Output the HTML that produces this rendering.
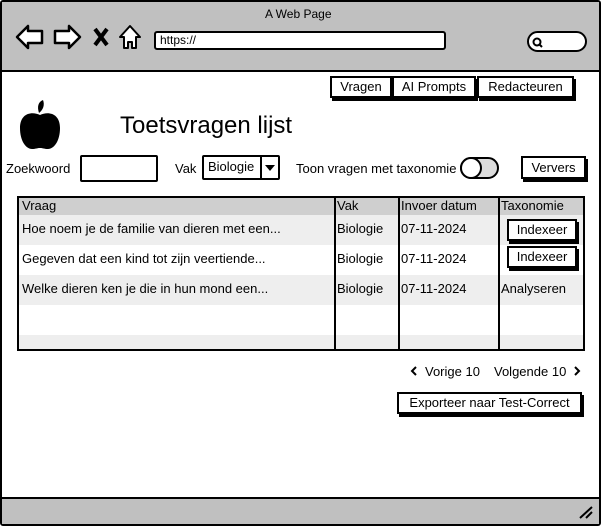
<!DOCTYPE html>
<html><head><style>
*{box-sizing:border-box;margin:0;padding:0}
body{width:601px;height:526px;background:#fff;font-family:"Liberation Sans",sans-serif;font-size:13px;color:#000;position:relative;overflow:hidden}
.a{position:absolute}
.btn{position:absolute;border:2px solid #000;background:#fff;box-shadow:2px 3px 0 #000;text-align:center;font-size:13px}
.t{position:absolute;white-space:nowrap}
</style></head><body>
<div class="a" style="left:0;top:0;width:601px;height:526px;border:2px solid #000;border-radius:3px"></div>
<div class="a" style="left:2px;top:2px;width:597px;height:70px;background:#c0c0c0;border-bottom:2px solid #000"></div>
<div class="t" style="left:265px;top:7px;font-size:12px">A Web Page</div>
<svg class="a" style="left:14px;top:22px" width="132" height="30" viewBox="0 0 132 30">
<path d="M3 15 L14 4 L14 9 L28 9 L28 21 L14 21 L14 26 Z" fill="#fff" stroke="#000" stroke-width="2.5" stroke-linejoin="round"/>
<path d="M66 15 L55 4 L55 9 L41 9 L41 21 L55 21 L55 26 Z" fill="#fff" stroke="#000" stroke-width="2.5" stroke-linejoin="round"/>
<path d="M81 7 L93 23 M93 7 L81 23" stroke="#000" stroke-width="4"/>
<path d="M106 15 L116 4 L126 15 L122 15 L122 26 L118 26 L118 20 L114 20 L114 26 L110 26 L110 15 Z" fill="#fff" stroke="#000" stroke-width="2" stroke-linejoin="round"/>
</svg>
<div class="a" style="left:154px;top:31px;width:292px;height:19px;background:#fff;border:2px solid #000;border-radius:3px"></div>
<div class="t" style="left:160px;top:33px;font-size:12px">https://</div>
<div class="a" style="left:527px;top:31px;width:60px;height:21px;background:#fff;border:2px solid #000;border-radius:11px"></div>
<svg class="a" style="left:531px;top:36px" width="14" height="12"><circle cx="6" cy="6" r="3.5" fill="none" stroke="#000" stroke-width="2"/><path d="M8 8 L11 11" stroke="#000" stroke-width="2"/></svg>

<div class="btn" style="left:330px;top:76px;width:62px;height:22px;line-height:18px">Vragen</div>
<div class="btn" style="left:392px;top:76px;width:84px;height:22px;line-height:18px">AI Prompts</div>
<div class="btn" style="left:477px;top:76px;width:97px;height:22px;line-height:18px">Redacteuren</div>

<svg class="a" style="left:16px;top:99px" width="48" height="52" viewBox="0 0 48 52">
<path d="M23 14 C21 8 22 3 27 1 C29 6 27 11 23 14Z" fill="#000"/>
<path d="M24 16 C16 12 4 14 4 29 C4 42 10 50 16 50 C20 50 21 49 24 49 C27 49 28 50 32 50 C38 50 44 42 44 29 C44 14 32 12 24 16Z" fill="#000"/>
</svg>
<div class="t" style="left:120px;top:112px;font-size:24px">Toetsvragen lijst</div>

<div class="t" style="left:6px;top:161px">Zoekwoord</div>
<div class="a" style="left:80px;top:155px;width:78px;height:27px;border:2px solid #000;border-radius:2px"></div>
<div class="t" style="left:175px;top:161px">Vak</div>
<div class="a" style="left:202px;top:155px;width:78px;height:25px;border:2px solid #000;border-radius:2px"></div>
<div class="a" style="left:260px;top:155px;width:2px;height:25px;background:#000"></div>
<div class="t" style="left:208px;top:159px">Biologie</div>
<svg class="a" style="left:264px;top:164px" width="12" height="8"><path d="M1 1 L11 1 L6 7Z" fill="#000"/></svg>
<div class="t" style="left:296px;top:161px">Toon vragen met taxonomie</div>
<div class="a" style="left:460px;top:157px;width:39px;height:22px;border:2px solid #000;border-radius:11px;background:#ddd"></div>
<div class="a" style="left:460px;top:157px;width:22px;height:22px;border:2px solid #000;border-radius:11px;background:#fff"></div>
<div class="btn" style="left:521px;top:156px;width:65px;height:23px;line-height:19px">Ververs</div>

<div class="a" style="left:17px;top:196px;width:568px;height:155px;border:2px solid #000;background:#fff;overflow:hidden">
 <div class="a" style="left:0;top:0;width:564px;height:17px;background:#cfcfcf"></div>
 <div class="a" style="left:0;top:17px;width:564px;height:30px;background:#eee"></div>
 <div class="a" style="left:0;top:77px;width:564px;height:30px;background:#eee"></div>
 <div class="a" style="left:0;top:137px;width:564px;height:20px;background:#eee"></div>
</div>
<div class="a" style="left:334px;top:196px;width:2px;height:155px;background:#000"></div>
<div class="a" style="left:398px;top:196px;width:2px;height:155px;background:#000"></div>
<div class="a" style="left:498px;top:196px;width:2px;height:155px;background:#000"></div>
<div class="t" style="left:22px;top:198px">Vraag</div>
<div class="t" style="left:337px;top:198px">Vak</div>
<div class="t" style="left:401px;top:198px">Invoer datum</div>
<div class="t" style="left:501px;top:198px">Taxonomie</div>
<div class="t" style="left:22px;top:221px">Hoe noem je de familie van dieren met een...</div>
<div class="t" style="left:22px;top:251px">Gegeven dat een kind tot zijn veertiende...</div>
<div class="t" style="left:22px;top:281px">Welke dieren ken je die in hun mond een...</div>
<div class="t" style="left:337px;top:221px">Biologie</div>
<div class="t" style="left:337px;top:251px">Biologie</div>
<div class="t" style="left:337px;top:281px">Biologie</div>
<div class="t" style="left:401px;top:221px">07-11-2024</div>
<div class="t" style="left:401px;top:251px">07-11-2024</div>
<div class="t" style="left:401px;top:281px">07-11-2024</div>
<div class="btn" style="left:507px;top:219px;width:70px;height:22px;line-height:18px">Indexeer</div>
<div class="btn" style="left:507px;top:246px;width:70px;height:22px;line-height:18px">Indexeer</div>
<div class="t" style="left:501px;top:281px">Analyseren</div>

<svg class="a" style="left:409px;top:365px" width="10" height="12"><path d="M7 2 L3 6 L7 10" fill="none" stroke="#000" stroke-width="2"/></svg>
<div class="t" style="left:425px;top:364px">Vorige 10</div>
<div class="t" style="left:494px;top:364px">Volgende 10</div>
<svg class="a" style="left:572px;top:365px" width="10" height="12"><path d="M3 2 L7 6 L3 10" fill="none" stroke="#000" stroke-width="2"/></svg>
<div class="btn" style="left:397px;top:392px;width:185px;height:22px;line-height:18px">Exporteer naar Test-Correct</div>

<div class="a" style="left:2px;top:497px;width:597px;height:27px;background:#c0c0c0;border-top:2px solid #000"></div>
<svg class="a" style="left:578px;top:505px" width="16" height="14"><path d="M2 13 L14 2 M8 13 L14 7" stroke="#000" stroke-width="2"/></svg>
</body></html>
